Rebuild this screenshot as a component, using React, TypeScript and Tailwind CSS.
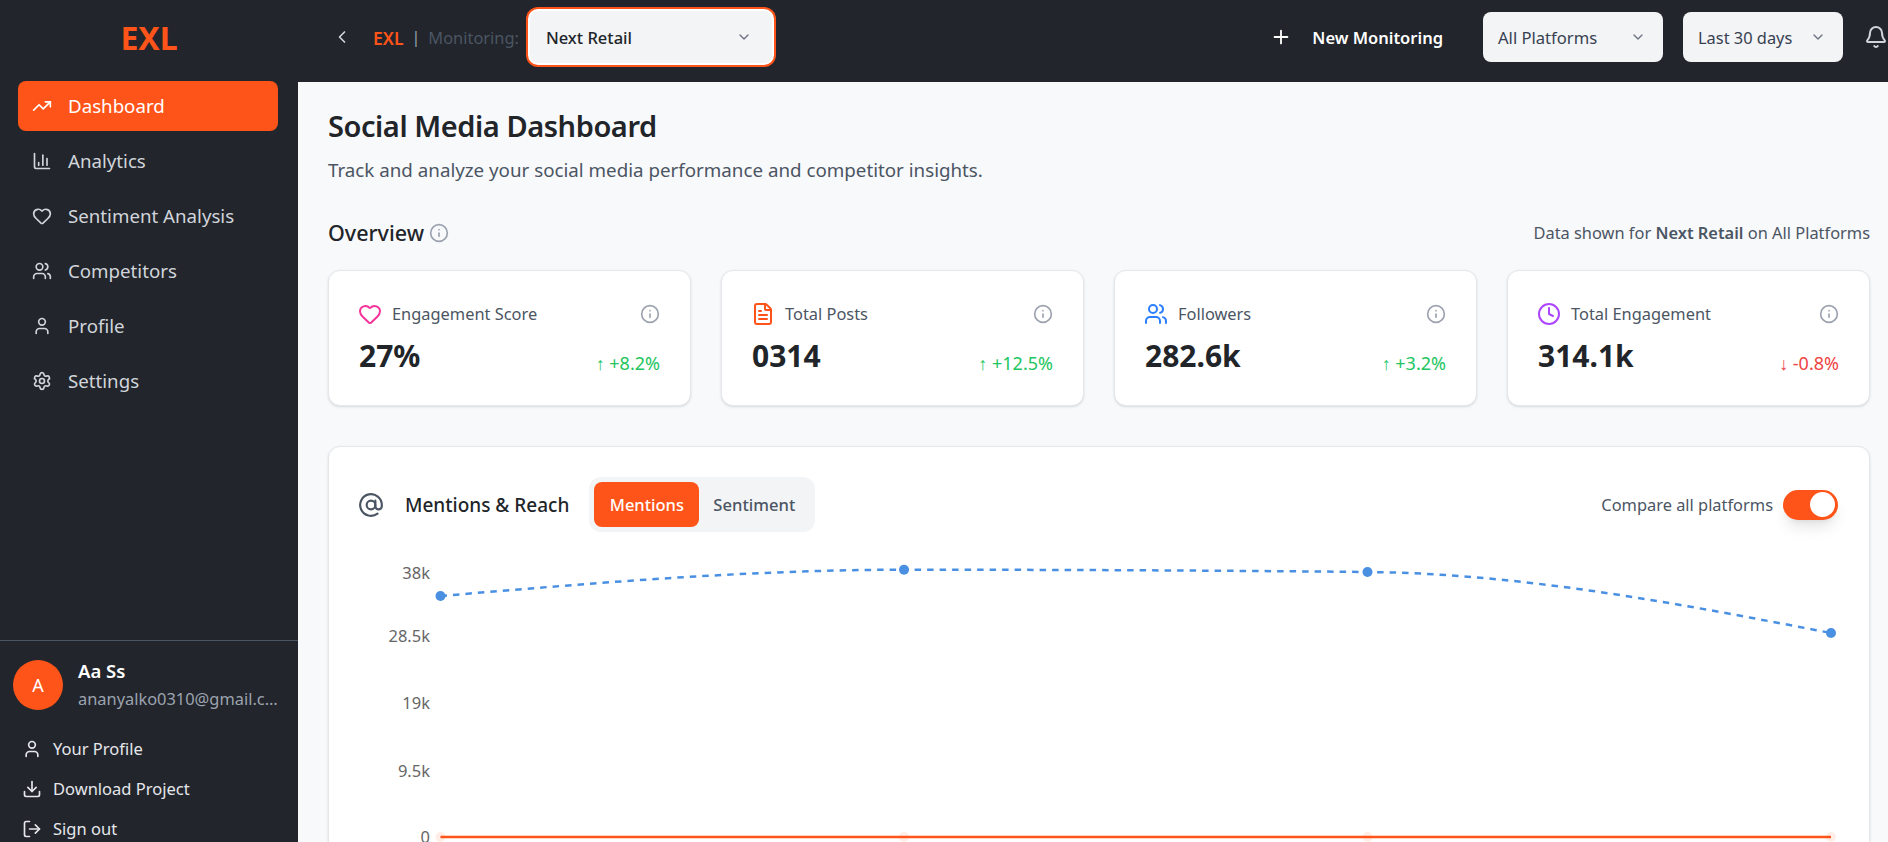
import React from 'react';
import {
  TrendingUp,
  ChartColumn,
  Heart,
  Users,
  User,
  Settings,
  FileText,
  Clock,
  Info,
  AtSign,
  ChevronLeft,
  ChevronDown,
  Plus,
  Bell,
  Download,
  LogOut,
} from 'lucide-react';

const navItems = [
  { label: 'Dashboard', icon: TrendingUp, active: true },
  { label: 'Analytics', icon: ChartColumn },
  { label: 'Sentiment Analysis', icon: Heart },
  { label: 'Competitors', icon: Users },
  { label: 'Profile', icon: User },
  { label: 'Settings', icon: Settings },
];

const accountLinks = [
  { label: 'Your Profile', icon: User },
  { label: 'Download Project', icon: Download },
  { label: 'Sign out', icon: LogOut },
];

const stats = [
  { label: 'Engagement Score', value: '27%', change: '↑ +8.2%', up: true, icon: Heart, color: 'text-pink-500' },
  { label: 'Total Posts', value: '0314', change: '↑ +12.5%', up: true, icon: FileText, color: 'text-[#ff5419]' },
  { label: 'Followers', value: '282.6k', change: '↑ +3.2%', up: true, icon: Users, color: 'text-blue-500' },
  { label: 'Total Engagement', value: '314.1k', change: '↓ -0.8%', up: false, icon: Clock, color: 'text-purple-500' },
];

const yTicks = [
  { label: '38k', y: 30 },
  { label: '28.5k', y: 93 },
  { label: '19k', y: 160 },
  { label: '9.5k', y: 228 },
  { label: '0', y: 294 },
];

const pointX = [79.5, 543, 1006.5, 1470];
const bluePoints = [
  [79.5, 53],
  [543, 26.7],
  [1006.5, 29],
  [1470, 90],
];

const Sidebar = () => (
  <aside className="w-[298px] shrink-0 h-full bg-[#22252b] flex flex-col">
    <div className="h-[81px] shrink-0 flex items-center justify-center pb-[6px]">
      <span className="text-[32px] font-bold text-[#ff5419]">EXL</span>
    </div>
    <nav className="flex-1 pl-[18px] pr-[20px]">
      {navItems.map((item) => (
        <a
          key={item.label}
          className={`h-[50px] mb-[5px] flex items-center gap-4 px-[14px] rounded-lg text-[18.7px] ${
            item.active ? 'bg-[#ff5419] text-white' : 'text-[#d1d5db]'
          }`}
        >
          <item.icon size={20} />
          {item.label}
        </a>
      ))}
    </nav>
    <div className="h-[202px] shrink-0 border-t border-[#4b5563]">
      <div className="flex items-center gap-[15px] pl-[13px] pt-[18px]">
        <div className="w-[50px] h-[50px] shrink-0 rounded-full bg-[#ff5419] text-white text-lg flex items-center justify-center">
          A
        </div>
        <div className="min-w-0 w-[201px]">
          <p className="text-white text-[18.5px] font-semibold leading-6">Aa Ss</p>
          <p className="text-[#9ca3af] text-[16.4px] leading-6 mt-1 truncate">ananyalko0310@gmail.com</p>
        </div>
      </div>
      <div className="pl-[22px] pt-[18px]">
        {accountLinks.map((link) => (
          <a key={link.label} className="h-10 flex items-center gap-[11px] text-[16.5px] text-[#e5e7eb]">
            <link.icon size={20} />
            {link.label}
          </a>
        ))}
      </div>
    </div>
  </aside>
);

const TopBar = () => (
  <header className="h-[82px] shrink-0 bg-[#22252b] flex items-center pl-[34px] pb-2">
    <ChevronLeft size={20} className="text-[#d1d5db] mr-[21px]" />
    <span className="pt-[2px] text-[17.5px] font-semibold text-[#ff5419]">EXL</span>
    <span className="mx-[8px] text-[#9ca3af]">|</span>
    <span className="pt-[2px] text-[16.4px] text-[#4b5563]">Monitoring:</span>
    <div className="ml-[9px] w-[246px] h-[56px] rounded-[10px] bg-[#f3f4f6] border-2 border-white ring-2 ring-[#ff5419] flex items-center justify-between pl-[16px] pr-[20px]">
      <span className="pt-[2px] text-[16.5px] font-medium text-[#212529]">Next Retail</span>
      <ChevronDown size={16} className="text-[#6b7280]" />
    </div>
    <div className="ml-auto flex items-center">
      <Plus size={22} className="text-white mr-5" />
      <span className="pt-[2px] text-[16.5px] font-semibold text-white mr-10">New Monitoring</span>
      <div className="w-[180px] h-[50px] rounded-lg bg-[#f3f4f6] flex items-center justify-between pl-[15px] pr-[17px] text-[#374151] mr-5">
        <span className="pt-[2px] text-[16.6px]">All Platforms</span>
        <ChevronDown size={16} className="text-[#6b7280]" />
      </div>
      <div className="w-[160px] h-[50px] rounded-lg bg-[#f3f4f6] flex items-center justify-between pl-[15px] pr-[17px] text-[#374151] mr-[21px]">
        <span className="pt-[2px] text-[16.4px]">Last 30 days</span>
        <ChevronDown size={16} className="text-[#6b7280]" />
      </div>
      <Bell size={24} className="text-[#d1d5db] shrink-0" />
    </div>
  </header>
);

const StatCard = ({ stat }: { stat: (typeof stats)[number] }) => (
  <div className="bg-white border border-[#e5e7eb] rounded-xl shadow-sm pl-[29px] pr-[30px] pt-[31px] h-[136px]">
    <div className="flex items-center h-6">
      <stat.icon size={24} className={stat.color} />
      <span className="ml-[10px] text-[16.4px] text-[#4b5563]">{stat.label}</span>
      <Info size={20} className="ml-auto text-[#9ca3af]" />
    </div>
    <div className="flex items-end justify-between mt-3">
      <span className="ml-px text-3xl font-bold text-[#212529] leading-9">{stat.value}</span>
      <span className={`text-lg leading-6 -mb-px ${stat.up ? 'text-[#22c55e]' : 'text-[#ef4444]'}`}>{stat.change}</span>
    </div>
  </div>
);

const MentionsChart = () => (
  <svg width={1476} height={310} className="block mt-[11px] ml-[3px]" fontFamily="'Noto Sans', sans-serif">
    {yTicks.map((tick) => (
      <text key={tick.label} x={69} y={tick.y} dy="0.35em" textAnchor="end" fontSize={16.5} fill="#666">
        {tick.label}
      </text>
    ))}
    <path
      d="M79.5 53 C234 39.85 388.5 26.7 543 26.7 C697.5 26.7 852 27.47 1006.5 29 C1161 30.53 1315.5 60.3 1470 90"
      fill="none"
      stroke="#4a90e2"
      strokeWidth={2.5}
      strokeDasharray="6.5 6"
    />
    {bluePoints.map(([x, y]) => (
      <circle key={x} cx={x} cy={y} r={5} fill="#4a90e2" />
    ))}
    {pointX.map((x) => (
      <circle key={x} cx={x} cy={294} r={5} fill="#ff5419" fillOpacity={0.1} />
    ))}
    <line x1={79.5} x2={1470} y1={294} y2={294} stroke="#ff5419" strokeWidth={2.5} />
  </svg>
);

const App = () => (
  <div className="h-screen w-full overflow-hidden flex font-['Noto_Sans',sans-serif] bg-[#f8f9fb]">
    <Sidebar />
    <div className="flex-1 min-w-0 flex flex-col h-full">
      <TopBar />
      <main className="flex-1 min-h-0 overflow-hidden pl-[30px] pr-[18px] pt-[26px]">
        <h1 className="text-[29px] tracking-[-0.015em] font-semibold text-[#212529] leading-9">Social Media Dashboard</h1>
        <p className="text-[18.75px] text-[#4b5563] leading-7 mt-3">
          Track and analyze your social media performance and competitor insights.
        </p>
        <div className="flex items-center justify-between mt-[35px] h-7">
          <div className="flex items-center gap-[5px]">
            <h2 className="text-[21.5px] font-medium text-[#212529]">Overview</h2>
            <Info size={20} className="text-[#9ca3af]" />
          </div>
          <p className="text-[16.4px] text-[#4b5563]">
            Data shown for <span className="font-semibold">Next Retail</span> on All Platforms
          </p>
        </div>
        <div className="grid grid-cols-4 gap-[30px] mt-[23px]">
          {stats.map((stat) => (
            <StatCard key={stat.label} stat={stat} />
          ))}
        </div>
        <section className="mt-10 bg-white border border-[#e5e7eb] rounded-xl shadow-sm pl-[29px] pr-[31px] pt-[30px] h-[480px]">
          <div className="flex items-center">
            <AtSign size={26} className="text-[#4b5563]" />
            <h3 className="ml-[21px] pt-[2px] text-[19px] font-medium text-[#212529]">Mentions &amp; Reach</h3>
            <div className="ml-[20px] h-[55px] w-[226px] bg-[#f3f4f6] rounded-xl flex items-center px-[5px]">
              <span className="h-[45px] w-[105px] pt-[2px] bg-[#ff5419] text-white text-[16.5px] font-medium rounded-lg flex items-center justify-center">
                Mentions
              </span>
              <span className="ml-[14px] pt-[2px] text-[#4b5563] text-[16.6px] font-medium">Sentiment</span>
            </div>
            <span className="ml-auto pt-[2px] text-[16.4px] text-[#4b5563]">Compare all platforms</span>
            <div className="ml-[10px] w-[55px] h-[30px] rounded-full bg-[#ff5419] relative shadow-lg">
              <span className="absolute right-[3px] top-[2.5px] w-[25px] h-[25px] rounded-full bg-white" />
            </div>
          </div>
          <MentionsChart />
        </section>
      </main>
    </div>
  </div>
);

export default App;
